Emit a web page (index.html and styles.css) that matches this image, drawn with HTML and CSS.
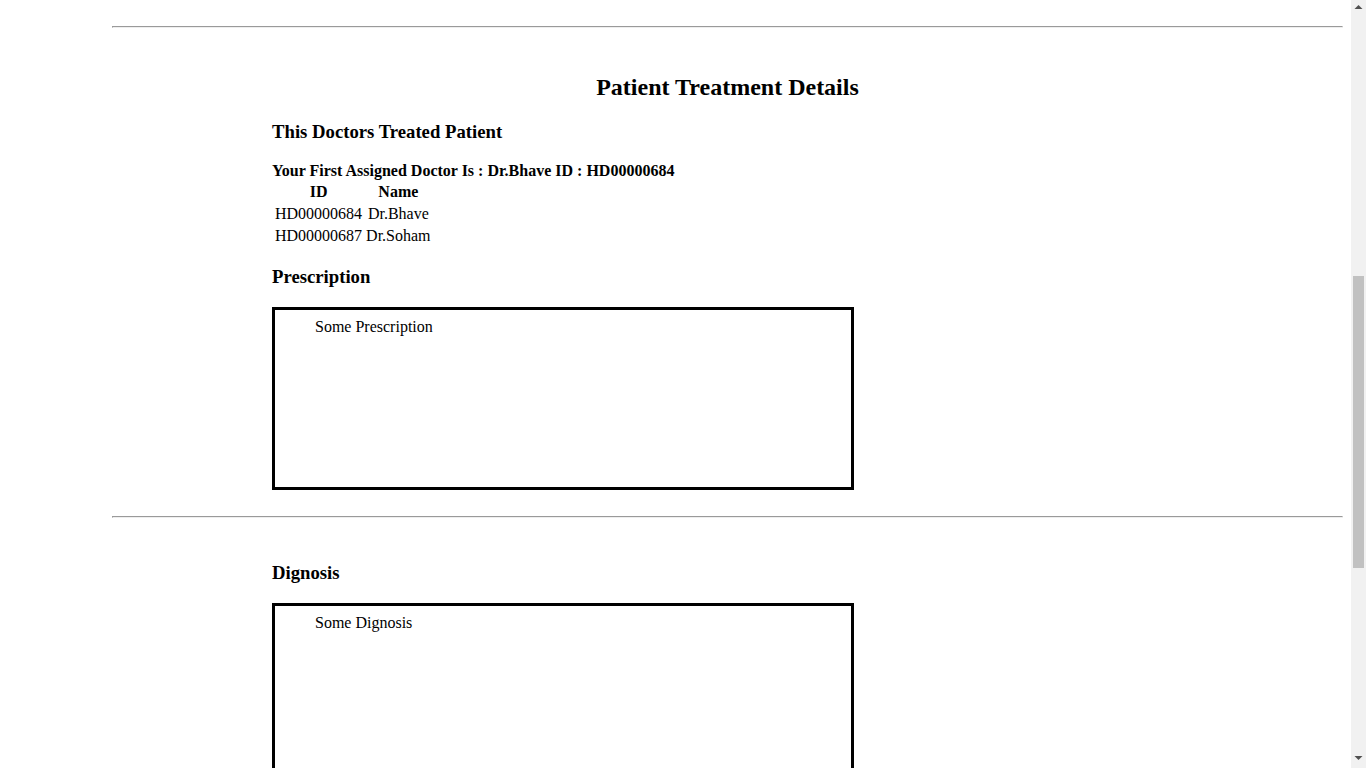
FILE: index.html
```html
<!DOCTYPE html>
<html lang="en">
<head>
<meta charset="utf-8">
<title>Patient Treatment Details</title>
<link rel="stylesheet" href="styles.css">
</head>
<body>
<div class="page">
  <hr class="rule">
  <section class="block">
    <h2 class="title">Patient Treatment Details</h2>
    <div class="content">
      <h3 class="subhead">This Doctors Treated Patient</h3>
      <p class="assigned">Your First Assigned Doctor Is : Dr.Bhave ID : HD00000684</p>
      <table class="doctors">
        <tr><th>ID</th><th>Name</th></tr>
        <tr><td>HD00000684</td><td>Dr.Bhave</td></tr>
        <tr><td>HD00000687</td><td>Dr.Soham</td></tr>
      </table>
      <h3 class="subhead subhead-rx">Prescription</h3>
      <div class="notes">Some Prescription</div>
    </div>
  </section>
  <hr class="rule">
  <section class="block">
    <div class="content">
      <h3 class="subhead subhead-first">Dignosis</h3>
      <div class="notes">Some Dignosis</div>
    </div>
  </section>
</div>
<div class="scrollbar" aria-hidden="true">
  <svg class="scroll-arrow scroll-arrow-up" width="15" height="15" viewBox="0 0 15 15"><path d="M3.5 9 L7.5 5 L11.5 9 Z" fill="#505050"/></svg>
  <div class="scroll-thumb"></div>
  <svg class="scroll-arrow scroll-arrow-down" width="15" height="15" viewBox="0 0 15 15"><path d="M3.5 5 L7.5 9 L11.5 5 Z" fill="#505050"/></svg>
</div>
</body>
</html>
```

FILE: styles.css
```css
html, body {
  margin: 0;
  padding: 0;
  background: #fff;
}

body {
  font-family: "Liberation Serif", "Times New Roman", serif;
  font-size: 16px;
  color: #000;
}

.page {
  padding: 26px 23px 0 112px;
  min-height: 1941px;
  box-sizing: border-box;
}

.rule {
  margin: 0;
  height: 0;
  border-style: inset;
  border-width: 1px;
  color: gray;
}

.block {
  padding-bottom: 26px;
}

.title {
  font-size: 24px;
  font-weight: bold;
  text-align: center;
  margin: 46px 0 20px;
}

.content {
  padding-left: 160px;
}

.subhead {
  font-size: 18.72px;
  font-weight: bold;
  margin: 18.72px 0;
}

.subhead-rx {
  margin: 17.72px 0 19.72px;
}

.subhead-first {
  margin-top: 44px;
}

.assigned {
  font-weight: bold;
  margin: 19px 0 0;
}

.doctors {
  border-spacing: 2px;
  margin: 0;
}

.doctors th,
.doctors td {
  padding: 1px;
  text-align: center;
}

.notes {
  width: 582px;
  height: 183px;
  box-sizing: border-box;
  border: 3px solid #000;
  padding: 8px 40px;
}

/* browser scrollbar drawn over the page edge */
.scrollbar {
  position: fixed;
  top: 0;
  right: 0;
  width: 15px;
  height: 100vh;
  background: #f1f1f1;
}

.scroll-arrow {
  position: absolute;
  left: 0;
  display: block;
}

.scroll-arrow-up {
  top: 0;
}

.scroll-arrow-down {
  bottom: 2px;
}

.scroll-thumb {
  position: absolute;
  top: 276px;
  left: 2px;
  width: 11px;
  height: 292px;
  background: #c1c1c1;
}
```
